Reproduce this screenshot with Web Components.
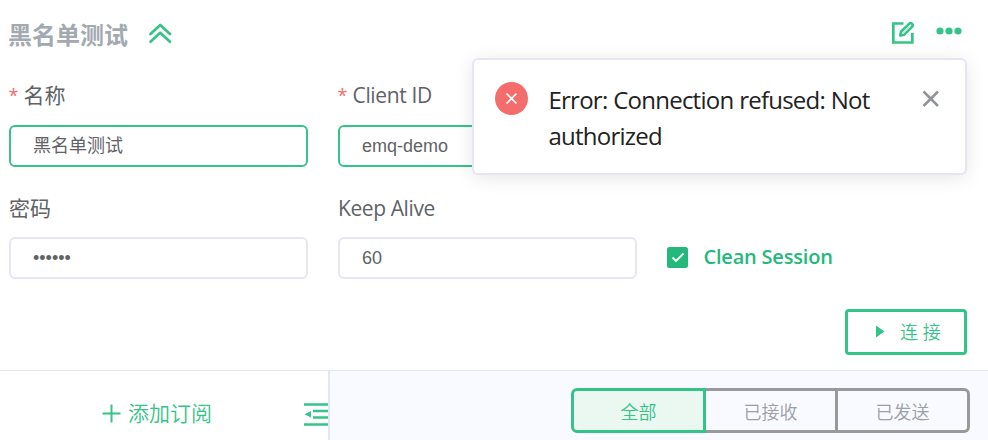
<!DOCTYPE html>
<html lang="zh">
<head>
<meta charset="utf-8">
<title>MQTT</title>
<style>
html,body{margin:0;height:440px;overflow:hidden;background:#fff}
body{font-family:"Open Sans","Noto Sans CJK SC",sans-serif;color:#606266;--green:#34c388;--line:#e4e7f2}
</style>
</head>
<body>
<mqtt-client></mqtt-client>
<script>
const define = (name, html, setup) => customElements.define(name, class extends HTMLElement {
  constructor() {
    super();
    this.attachShadow({ mode: 'open' }).innerHTML = html;
  }
  connectedCallback() { if (setup) setup(this, this.shadowRoot); }
});

define('client-header', `<style>
:host{display:flex;height:70px;box-sizing:border-box;padding:0 26px 0 8px;align-items:center}
h1{margin:0;font-size:24px;line-height:36px;font-weight:700;color:#a2a9b0;width:120px;white-space:nowrap}
svg{display:block;flex:none}
.up{margin-left:20px;margin-top:-5px}
.edit{margin-left:auto;margin-top:-5px}
.more{margin-left:21px;margin-top:-8px}
</style>
<h1><slot></slot></h1>
<svg class="up" width="24" height="22" viewBox="0 0 24 22" fill="none" stroke="#34c388" stroke-width="2.700" stroke-linecap="round" stroke-linejoin="round"><path d="M2.500 12 12.200 3 22 12M2.500 19.700 12.200 10.700 22 19.700"/></svg>
<svg class="edit" width="24" height="24" viewBox="0 0 24 24" fill="none" stroke="#34c388" stroke-width="2.700"><path d="M12.500 2.500H2.300V21.500H21.300V11.800"/><path d="M9.300 14.600 10 10.800 18.600 2.400Q19.800 1.600 21.100 2.800 22.200 4.200 21.400 5.300L13 13.800Z" stroke-width="2.600" stroke-linejoin="round"/><path d="M12 12 18.500 5.500" stroke="#bfead7" stroke-width="1.200"/></svg>
<svg class="more" width="26" height="8" viewBox="0 0 26 8" fill="#34c388"><circle cx="4" cy="4" r="3.600"/><circle cx="13" cy="4" r="3.600"/><circle cx="22" cy="4" r="3.600"/></svg>`);

define('form-field', `<style>
:host{display:flex;flex-direction:column}
.label{display:flex;height:30px;align-items:center;font-size:21px;line-height:30px;margin-bottom:14px;white-space:nowrap}
.star{color:#f56c6c;width:15px;display:none;font-size:18px;margin-left:-.5px}
:host([required]) .star{display:block}
:host([required]) .label{height:28px;margin-bottom:16px}
:host([required]) .box{border-color:var(--green)}
.text{letter-spacing:var(--ls,0)}
.box{height:42px;box-sizing:border-box;border:2px solid var(--line);border-radius:6px;padding:0 22px;display:flex;align-items:center;font:18px/24px "Liberation Sans","Noto Sans CJK SC",sans-serif;background:#fff}
</style>
<div class="label"><span class="star">*</span><span class="text"></span></div>
<div class="box"><slot></slot></div>`, (el, root) => {
  root.querySelector('.text').textContent = el.getAttribute('label');
});

define('check-option', `<style>
:host{display:flex;align-items:center;height:41px;align-self:start;margin-top:44px;color:#23b97a;font-size:20px;font-weight:600;white-space:nowrap}
svg{margin-right:15.500px}
span{letter-spacing:-.2px;margin-top:-2px}
</style>
<svg width="21" height="21" viewBox="0 0 21 21"><rect width="21" height="21" rx="2.500" fill="#23b97a"/><path d="M5.500 10.500 9 14 16.500 6.500" fill="none" stroke="#fff" stroke-width="1.800"/></svg>
<span><slot></slot></span>`);

define('connect-button', `<style>
:host{display:flex;width:122px;height:46px;box-sizing:border-box;border:3px solid var(--green);border-radius:4px;align-items:center;color:var(--green);font-size:18px;padding:0 0 2px 28px;font-weight:350;white-space:nowrap}
svg{margin-right:15px}
</style>
<svg width="9" height="13" viewBox="0 0 9 13" fill="#34c388"><path d="M0 .5 8.500 6.500 0 12.500Z"/></svg><slot></slot>`);

define('subscribe-panel', `<style>
:host{display:flex;width:330px;height:70px;box-sizing:border-box;border-right:2px solid var(--line);align-items:center;color:var(--green);font-size:21px;background:#fff;padding-top:15px}
.plus{margin-left:102px}
span{width:85px;margin:-4px 0 0 7px;white-space:nowrap;font-weight:350}
.fold{margin-left:auto;margin-top:2px}
svg{flex:none;display:block}
</style>
<svg class="plus" width="19" height="19" viewBox="0 0 19 19" stroke="#34c388" stroke-width="2"><path d="M9.500 .5V18.500M.5 9.500H18.500"/></svg>
<span><slot></slot></span>
<svg class="fold" width="24" height="23" viewBox="0 0 24 23"><path d="M0 1.500H24M9 8H24M9 14.500H24M0 21.500H24" stroke="#34c388" stroke-width="2.300"/><path d="M.5 11.300 7 8V14.600Z" fill="#34c388"/></svg>`);

define('filter-tabs', `<style>
:host{display:flex;width:399px;height:45px;font-size:18px;font-weight:350;color:#9aa0a6}
div{box-sizing:border-box;display:flex;align-items:center;justify-content:center;border:3px solid #999;border-left:0;width:132px}
.first{width:135px;border:3px solid var(--green);border-radius:6px 0 0 6px;color:var(--green);background:#ebf8f1}
.last{border-radius:0 6px 6px 0}
</style>
<div class="first"><slot name="all"></slot></div><div><slot name="received"></slot></div><div class="last"><slot name="sent"></slot></div>`);

define('error-toast', `<style>
:host{position:absolute;left:472px;top:58px;width:495px;height:117px;box-sizing:border-box;background:#fff;border:2px solid var(--line);border-radius:6px;box-shadow:0 3px 18px rgba(0,0,0,.1);display:flex;align-items:flex-start;padding:22px 25px 0 20.500px}
p{margin:0 0 0 21px;width:350px;color:#222;font-size:24px;line-height:36px;letter-spacing:-.76px;word-spacing:.3px}
svg{flex:none;display:block}
.close{margin:8px 0 0 auto}
</style>
<svg width="33" height="33" viewBox="0 0 33 33"><circle cx="16.500" cy="16.500" r="16.500" fill="#f56c6c"/><path d="M11.500 11.500 21.500 21.500M21.500 11.500 11.500 21.500" stroke="#fff" stroke-width="1.700"/></svg>
<p><slot></slot></p>
<svg class="close" width="18" height="18" viewBox="0 0 18 18"><path d="M1.500 1.500 16 16M16 1.500 1.500 16" stroke="#909399" stroke-width="2.500"/></svg>`);

define('mqtt-client', `<style>
:host{display:flex;flex-direction:column;width:988px;height:440px;position:relative;overflow:hidden}
.form{display:grid;grid-template-columns:299px 299px 299px;column-gap:30px;row-gap:26px;padding:11px 0 0 9px}
.actions{display:flex;justify-content:flex-end;padding:30px 21px 15px 0}
.bottom{display:flex;border-top:1px solid var(--line);height:69px;background:#f9faff}
filter-tabs{margin:17px 18px 0 auto}
.id{--ls:-.35px}.keep{--ls:-.4px}
.dots{font-size:18px;letter-spacing:0}
</style>
<client-header>黑名单测试</client-header>
<div class="form">
<form-field required label="名称">黑名单测试</form-field>
<form-field required class="id" label="Client ID">emq-demo</form-field>
<i></i>
<form-field label="密码"><span class="dots">••••••</span></form-field>
<form-field class="keep" label="Keep Alive">60</form-field>
<check-option>Clean Session</check-option>
</div>
<div class="actions"><connect-button>连 接</connect-button></div>
<div class="bottom"><subscribe-panel>添加订阅</subscribe-panel>
<filter-tabs><span slot="all">全部</span><span slot="received">已接收</span><span slot="sent">已发送</span></filter-tabs></div>
<error-toast>Error: Connection refused: Not authorized</error-toast>`);
</script>
</body>
</html>
